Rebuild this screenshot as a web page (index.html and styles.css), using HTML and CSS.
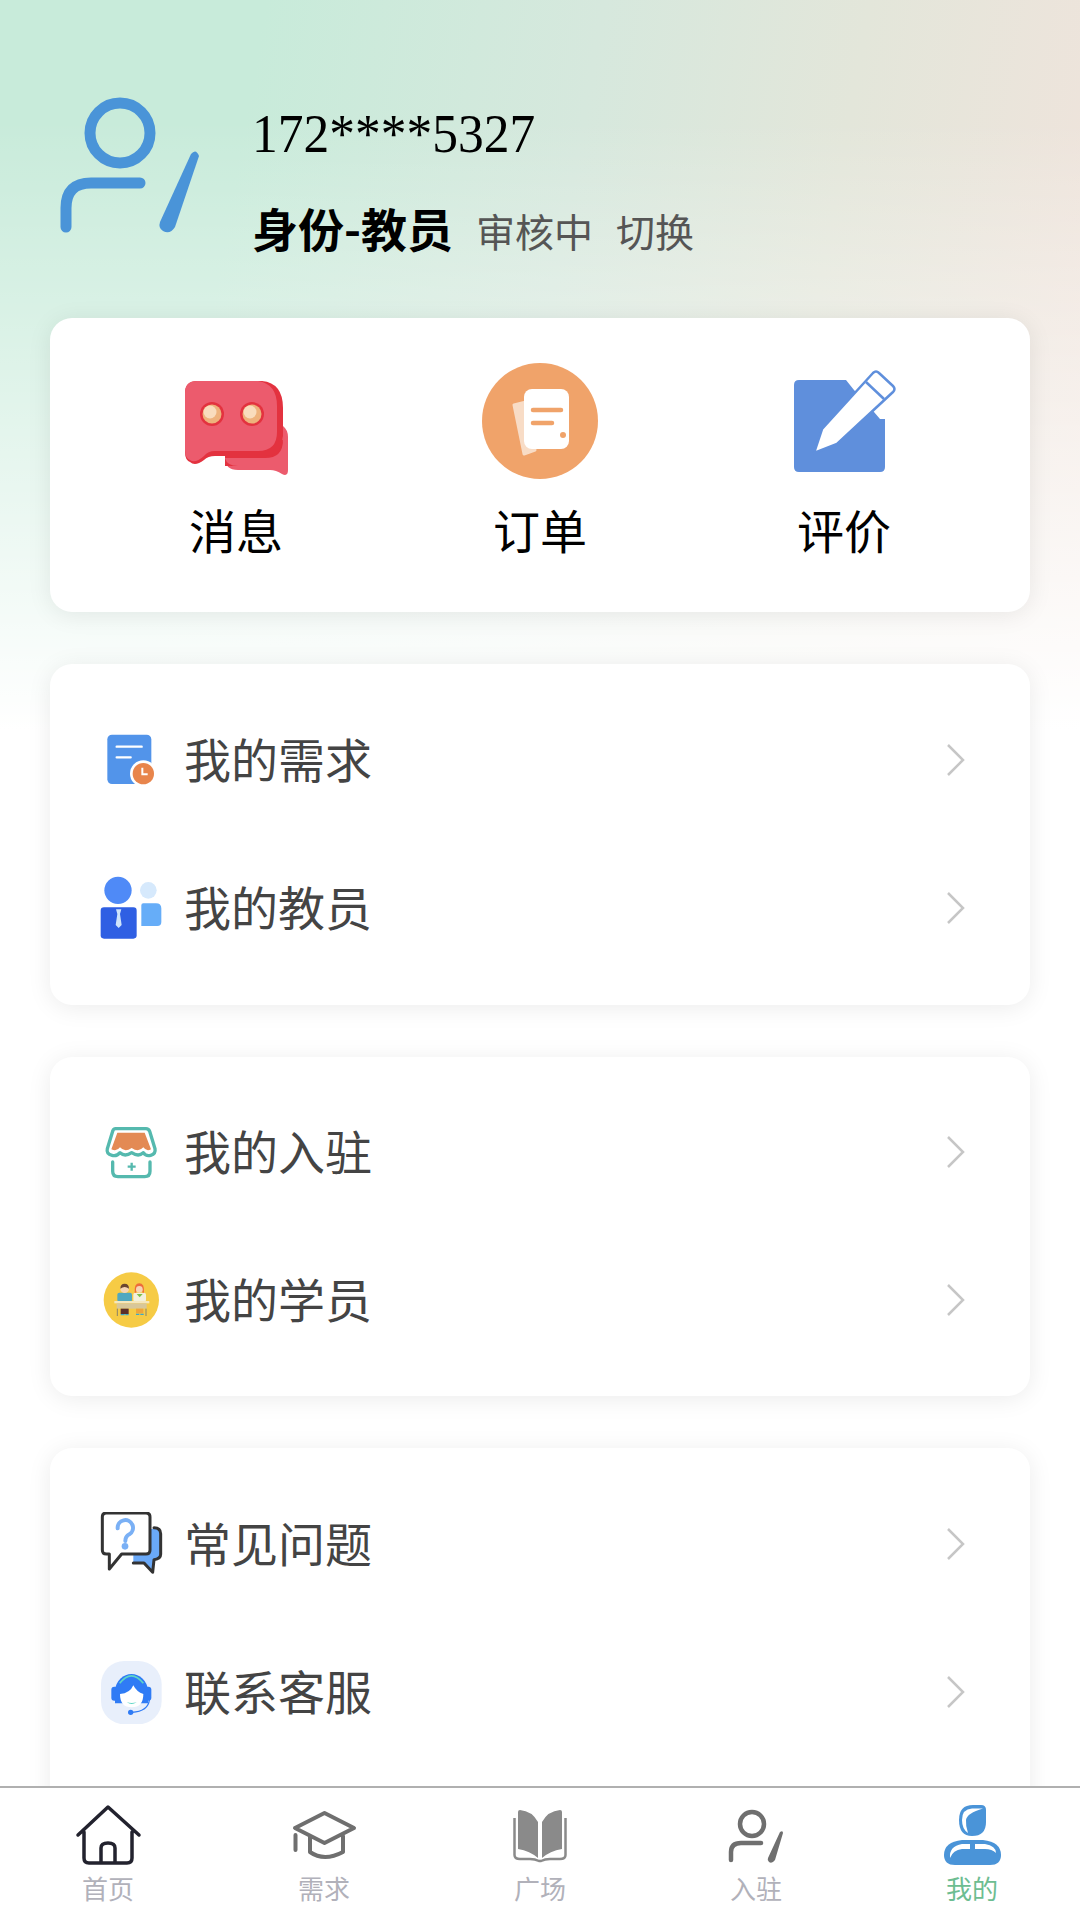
FILE: index.html
```html
<!DOCTYPE html>
<html lang="zh-CN">
<head>
  <meta charset="UTF-8" />
  <meta name="viewport" content="width=device-width, initial-scale=1.0"/>
  <title>我的</title>
  <link rel="stylesheet" href="styles.css">
</head>
<body>

<main class="page">
  <header class="profile">
    <svg class="avatar" viewBox="60 97 140 140">
      <circle cx="120" cy="133" r="30" fill="none" stroke="#4a94d8" stroke-width="11"/>
      <path d="M66 227 V208 Q66 183 91 183 H140" fill="none" stroke="#4a94d8" stroke-width="11" stroke-linecap="round"/>
      <path d="M191 154 Q196 148 199 156 L175 227 Q170 235 163 231 Q158 228 160 222Z" fill="#4a94d8"/>
    </svg>
    <div class="profile-info">
      <div class="phone">172****5327</div>
      <div class="identity">
        <b>身份-教员</b>
        <span>审核中</span>
        <span>切换</span>
      </div>
    </div>
  </header>

  <section class="card quick">
    <div class="quick-item">
      <svg class="quick-icon" viewBox="184 360 104 124">
        <path d="M225 440 H283 V426 Q288 430 288 437 V470 Q288 477 282 474 Q276 470 270 470 H238 Q225 470 225 458Z" fill="#ec5b6d"/>
        <path d="M225 452 H265 Q283 452 283 436 V440 Q283 458 265 458 H225 Q227 466 238 466 H225Z" fill="#e3323f"/>
        <path d="M185 393 Q185 381 197 381 H262 Q283 383 283 408 V436 Q283 456 265 456 H215 Q208 456 204 460 Q195 467 190 462 Q185 460 185 452Z" fill="#e3323f"/>
        <path d="M185 393 Q185 381 197 381 H258 Q277 384 277 406 V432 Q277 451 258 451 H215 Q208 451 204 456 Q195 464 190 460 Q185 458 185 450Z" fill="#ec5b6d"/>
        <circle cx="212" cy="414" r="12" fill="#e3323f"/>
        <circle cx="212" cy="414" r="9.500" fill="#eeb27c"/>
        <circle cx="210" cy="412" r="6.500" fill="#f9dcbd"/>
        <circle cx="252" cy="414" r="12" fill="#e3323f"/>
        <circle cx="252" cy="414" r="9.500" fill="#eeb27c"/>
        <circle cx="250" cy="412" r="6.500" fill="#f9dcbd"/>
      </svg>
      <span>消息</span>
    </div>
    <div class="quick-item">
      <svg class="quick-icon" viewBox="478 360 124 124">
        <circle cx="540" cy="421" r="58" fill="#f0a36a"/>
        <path d="M514 405 L526 402 L535 450 L524 454Z" fill="#f8dcc6" stroke="#f8dcc6" stroke-width="3" stroke-linejoin="round"/>
        <rect x="524" y="389" width="45" height="60" rx="8" fill="#fff"/>
        <path d="M533 410 H561 M533 423 H552" stroke="#f0a36a" stroke-width="4.500" stroke-linecap="round"/>
        <circle cx="563" cy="435" r="3" fill="#f0a36a"/>
      </svg>
      <span>订单</span>
    </div>
    <div class="quick-item">
      <svg class="quick-icon" viewBox="782 360 124 124">
        <path d="M799 380 H846 L854 390 L874 412 L880 419 H885 V467 Q885 472 880 472 H799 Q794 472 794 467 V385 Q794 380 799 380Z" fill="#5f8fdc"/>
        <path d="M822 429 L873 373 Q876 370 879 373 L893 386 Q896 389 893 392 L837 444 L814 453Z" fill="#fff" stroke="#5f8fdc" stroke-width="2.500" stroke-linejoin="round"/>
        <path d="M866 382 L884 399" stroke="#5f8fdc" stroke-width="2.500"/>
      </svg>
      <span>评价</span>
    </div>
  </section>

  <section class="card menu">
    <div class="menu-row">
      <svg class="menu-icon" viewBox="57 54 192 192">
        <rect x="82" y="74" width="132" height="148" rx="14" fill="#5294ea"/>
        <path d="M110 110 H185 M110 142 H152" stroke="#fff" stroke-width="7" stroke-linecap="round"/>
        <circle cx="190" cy="191" r="40" fill="#fff"/>
        <circle cx="190" cy="191" r="32" fill="#e8854c"/>
        <path d="M187 173 V193 H203" fill="none" stroke="#fff" stroke-width="6"/>
      </svg>
      <span class="menu-text">我的需求</span>
      <svg class="chevron" viewBox="0 0 20 36"><path d="M2 3 L17 18 L2 33" /></svg>
    </div>
    <div class="menu-row">
      <svg class="menu-icon" viewBox="57 498 192 192">
        <circle cx="114" cy="541" r="41" fill="#4f8af7"/>
        <rect x="62" y="592" width="108" height="94" rx="10" fill="#2f5fe3"/>
        <path d="M108 598 H124 L120 612 L125 645 L116 654 L107 645 L112 612Z" fill="#cfe4fb"/>
        <circle cx="205" cy="541" r="25" fill="#d6e9fc"/>
        <path d="M190 580 H228 Q244 580 244 596 V636 Q244 648 232 648 H184 V586 Q184 580 190 580Z" fill="#66adf8"/>
      </svg>
      <span class="menu-text">我的教员</span>
      <svg class="chevron" viewBox="0 0 20 36"><path d="M2 3 L17 18 L2 33" /></svg>
    </div>
  </section>

  <section class="card menu tight">
    <div class="menu-row">
      <svg class="menu-icon" viewBox="57 60 192 192">
        <path d="M107 86 H198 Q206 86 209 94 L225 146 Q228 162 212 166 Q198 170 190 158 Q176 172 155 158 Q134 172 120 158 Q110 170 96 166 Q78 162 82 146 L98 94 Q100 86 107 86Z" fill="#fff" stroke="#55b9ae" stroke-width="10" stroke-linejoin="round"/>
        <path d="M112 98 H194 L213 148 Q200 156 190 142 Q176 158 155 144 Q134 158 120 142 Q110 156 94 148Z" fill="#e38a54"/>
        <path d="M98 186 V214 Q98 230 114 230 H194 Q210 230 210 214 V186" fill="none" stroke="#55b9ae" stroke-width="10" stroke-linecap="round"/>
        <path d="M143 200 H167 M155 188 V212" stroke="#55b9ae" stroke-width="7"/>
      </svg>
      <span class="menu-text">我的入驻</span>
      <svg class="chevron" viewBox="0 0 20 36"><path d="M2 3 L17 18 L2 33" /></svg>
    </div>
    <div class="menu-row">
      <svg class="menu-icon" viewBox="57 504 192 192">
        <circle cx="154" cy="600" r="83" fill="#f6cb45"/>
        <rect x="112" y="578" width="44" height="28" rx="6" fill="#4fa8c0"/>
        <rect x="160" y="578" width="38" height="28" rx="6" fill="#f2f0dc"/>
        <path d="M170 582 L179 592 L188 582Z" fill="#7cc04b"/>
        <circle cx="134" cy="566" r="13" fill="#f5d5b5"/>
        <path d="M121 566 Q121 551 134 551 Q147 551 147 566 Q134 556 121 566Z" fill="#6b4630"/>
        <path d="M164 578 Q162 550 178 550 Q194 550 192 578 L187 578 Q190 562 178 560 Q168 562 169 578Z" fill="#ee6c3a"/>
        <circle cx="178" cy="568" r="10" fill="#f5d5b5"/>
        <rect x="103" y="603" width="105" height="7" fill="#f5e7bd"/>
        <rect x="110" y="610" width="90" height="16" fill="#d8c79a"/>
        <rect x="122" y="626" width="24" height="16" fill="#5b2f2a"/>
        <rect x="168" y="626" width="22" height="14" fill="#f0a43a"/>
        <path d="M122 644 H134 M136 644 H146 M168 643 H178 M181 643 H191" stroke="#3aa9c9" stroke-width="4"/>
        <path d="M112 626 V648 M198 626 V648" stroke="#8b8468" stroke-width="3"/>
      </svg>
      <span class="menu-text">我的学员</span>
      <svg class="chevron" viewBox="0 0 20 36"><path d="M2 3 L17 18 L2 33" /></svg>
    </div>
  </section>

  <section class="card menu last">
    <div class="menu-row">
      <svg class="menu-icon" viewBox="57 69 192 192">
        <path d="M160 120 H226 Q240 120 240 134 V196 Q240 212 224 212 L219 250 L190 222 H160Z" fill="#6aa9f8"/>
        <path d="M222 116 Q242 116 242 134 V196 Q242 210 222 212 L218 250 L192 222 H160" fill="none" stroke="#333" stroke-width="9" stroke-linejoin="round" stroke-linecap="round"/>
        <path d="M79 72 H198 Q210 72 210 84 V183 Q210 195 198 195 H125 L88 240 V195 H79 Q67 195 67 183 V84 Q67 72 79 72Z" fill="#fff" stroke="#333" stroke-width="9" stroke-linejoin="round"/>
        <path d="M113 118 A23 23 0 1 1 148 136 Q136 142 136 156" fill="none" stroke="#7ab0f5" stroke-width="12" stroke-linecap="round"/>
        <circle cx="135" cy="172" r="10" fill="#7ab0f5"/>
      </svg>
      <span class="menu-text">常见问题</span>
      <svg class="chevron" viewBox="0 0 20 36"><path d="M2 3 L17 18 L2 33" /></svg>
    </div>
    <div class="menu-row">
      <svg class="menu-icon" viewBox="57 510 192 192">
        <rect x="63" y="513" width="182" height="190" rx="70" fill="#e8effb"/>
        <rect x="94" y="590" width="20" height="42" rx="9" fill="#2f7bf5"/>
        <rect x="194" y="590" width="20" height="42" rx="9" fill="#2f7bf5"/>
        <path d="M105 600 A50 56 0 0 1 204 600 V640 H105Z" fill="#2f7bf5"/>
        <path d="M119 580 Q154 535 190 580" fill="none" stroke="#5ed6c6" stroke-width="5"/>
        <path d="M120 612 Q150 610 160 586 Q170 606 190 612 Q190 652 155 652 Q120 652 120 612Z" fill="#fff"/>
        <path d="M140 636 Q155 648 170 636 Q155 642 140 636Z" fill="#5ed6c6"/>
        <path d="M208 630 Q204 664 156 667" fill="none" stroke="#2f7bf5" stroke-width="4"/>
        <circle cx="152" cy="667" r="8" fill="#2f7bf5"/>
      </svg>
      <span class="menu-text">联系客服</span>
      <svg class="chevron" viewBox="0 0 20 36"><path d="M2 3 L17 18 L2 33" /></svg>
    </div>
  </section>
</main>

<nav class="tabbar">
  <div class="tab">
    <svg class="tab-icon" viewBox="72 1804 72 64">
      <path d="M78 1835 L108 1807 L139 1835 M84 1832 V1858 Q84 1863 89 1863 H127 Q132 1863 132 1858 V1832 M101 1863 V1848 Q101 1843 108 1843 Q115 1843 115 1848 V1863" fill="none" stroke="#22222e" stroke-width="3.500" stroke-linejoin="round" stroke-linecap="round"/>
    </svg>
    <span>首页</span>
  </div>
  <div class="tab">
    <svg class="tab-icon" viewBox="288 1804 72 64">
      <path d="M324.500 1813 L354 1828 L324.500 1843 L295 1828Z M310 1836 V1852 Q324 1862 343 1852 V1836 M295.500 1835 V1850" fill="none" stroke="#6f6f6f" stroke-width="4" stroke-linejoin="round" stroke-linecap="round"/>
    </svg>
    <span>需求</span>
  </div>
  <div class="tab">
    <svg class="tab-icon" viewBox="504 1804 72 64">
      <path d="M520 1810 Q532 1811 538 1822 V1858 Q530 1851 518 1849 V1812 Q518 1810 520 1810Z M560 1810 Q548 1811 542 1822 V1858 Q550 1851 562 1849 V1812 Q562 1810 560 1810Z" fill="#8a8a8a"/>
      <path d="M514.500 1818 V1855 Q514.500 1859 520 1859 H530 Q535 1859 539 1861 H541 Q545 1859 550 1859 H560 Q565.500 1859 565.500 1855 V1818" fill="none" stroke="#8a8a8a" stroke-width="2.500"/>
    </svg>
    <span>广场</span>
  </div>
  <div class="tab">
    <svg class="tab-icon" viewBox="720 1804 72 64">
      <circle cx="752" cy="1824" r="12" fill="none" stroke="#6f6f6f" stroke-width="4.500"/>
      <path d="M731 1860 V1852 Q731 1843 741 1843 H761" fill="none" stroke="#6f6f6f" stroke-width="4.500" stroke-linecap="round"/>
      <path d="M780 1832 Q783 1830 783 1833 L775 1860 Q772 1864 769 1862 Q767 1860 768 1858Z" fill="#6f6f6f"/>
    </svg>
    <span>入驻</span>
  </div>
  <div class="tab active">
    <svg class="tab-icon" viewBox="936 1804 72 64">
      <path d="M973 1805 H981 Q986 1805 986 1810 V1822 Q986 1836 972 1836 Q959 1836 959 1820 Q959 1805 973 1805Z" fill="#4a94d8"/>
      <path d="M983 1808.500 H972 Q962 1809 962 1820 Q962 1829 968 1833 Q965.500 1826 966 1820 Q967 1813 983 1808.500Z" fill="#fff"/>
      <path d="M962 1840 H983 Q1001 1842 1001 1855 Q1001 1865 990 1865 H955 Q944 1865 944 1855 Q944 1842 962 1840Z" fill="#4a94d8"/>
      <path d="M970 1844 H962 Q949 1846 950 1858 Q953 1850 962 1849 H970Z M975 1844 H985 Q996 1846 996 1853 Q992 1849 985 1849 H975Z" fill="#fff"/>
    </svg>
    <span>我的</span>
  </div>
</nav>

</body>
</html>
```

FILE: styles.css
```css
* {
  box-sizing: border-box;
}

html, body {
  margin: 0;
  padding: 0;
  height: 1920px;
  overflow: hidden;
}

body {
  display: flex;
  flex-direction: column;
  font-family: "Noto Sans CJK SC", "Noto Sans", sans-serif;
  background: #fff;
}

.page {
  flex: 1;
  min-height: 0;
  overflow: hidden;
  padding: 0 50px;
  background:
    linear-gradient(to bottom, rgba(255, 255, 255, 0) 0, rgba(255, 255, 255, 0) 120px, #fff 730px) no-repeat,
    linear-gradient(100deg, #c8ebda 0, #c8ebda 22%, #d6e8dd 50%, #e3e6da 72%, #f2e3dc 100%) no-repeat;
  background-size: 100% 730px;
}

.profile {
  display: flex;
  align-items: flex-start;
  height: 318px;
  padding: 97px 0 0 10px;
}

.avatar {
  width: 140px;
  height: 140px;
  flex: none;
}

.profile-info {
  margin-left: 52px;
  padding-top: 7px;
}

.phone {
  font-family: "Liberation Serif", serif;
  font-size: 51.5px;
  line-height: 60px;
  color: #000;
  transform: scaleY(1.08);
}

.identity {
  margin-top: 33px;
  display: flex;
  align-items: baseline;
  color: #555;
  font-size: 39px;
  line-height: 60px;
}

.identity b {
  font-size: 46px;
  color: #000;
  margin-right: 23px;
}

.identity span {
  margin-right: 23px;
}

.card {
  background: #fff;
  border-radius: 22px;
  box-shadow: 0 3px 24px rgba(0, 0, 0, 0.08);
  margin-bottom: 52px;
}

.quick {
  display: grid;
  grid-template-columns: repeat(3, 304px);
  justify-content: center;
  height: 294px;
  padding-top: 42px;
}

.quick-item {
  display: flex;
  flex-direction: column;
  align-items: center;
  font-size: 47px;
  line-height: 60px;
  color: #000;
}

.quick-icon {
  width: 124px;
  height: 124px;
  margin-bottom: 15px;
}

.menu {
  padding: 22px 0 23px;
}

.menu.tight {
  padding: 21px 0 22px;
}

/* last card runs on under the tab bar */
.menu.last {
  padding-bottom: 160px;
}

.menu-row {
  display: flex;
  align-items: center;
  height: 148px;
  padding: 0 64px 0 49px;
}

.menu-icon {
  width: 64px;
  height: 64px;
  flex: none;
}

.menu-text {
  flex: 1;
  margin-left: 21px;
  padding-bottom: 5px;
  font-size: 47px;
  color: #444;
}

.chevron {
  width: 20px;
  height: 36px;
  flex: none;
}

.chevron path {
  fill: none;
  stroke: #c6c6c6;
  stroke-width: 2.5;
}

.tabbar {
  flex: none;
  height: 134px;
  display: grid;
  grid-template-columns: repeat(5, 216px);
  background: #fff;
  border-top: 2px solid #b0b0b0;
  padding-top: 16px;
}

.tab {
  display: flex;
  flex-direction: column;
  align-items: center;
  font-size: 26px;
  line-height: 30px;
  color: #b1b1ba;
}

.tab.active {
  color: #6dbd91;
}

.tab-icon {
  width: 72px;
  height: 64px;
  margin-bottom: 5px;
}
```
